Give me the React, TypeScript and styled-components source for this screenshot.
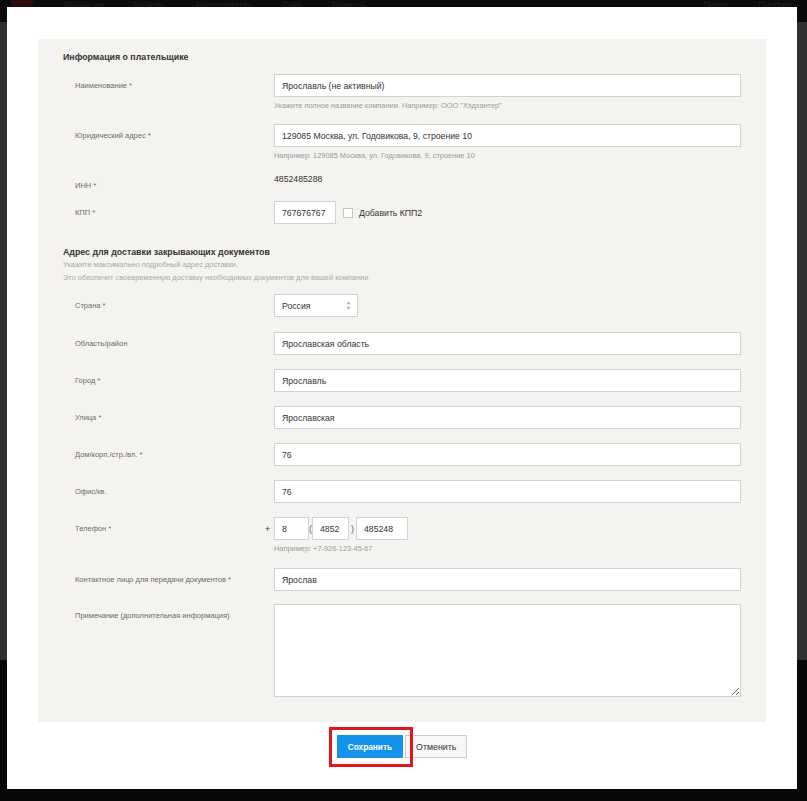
import React from "react";
import styled, { createGlobalStyle } from "styled-components";

const GlobalStyle = createGlobalStyle`
  html, body {
    margin: 0;
    padding: 0;
  }
  body {
    font-family: "Liberation Sans", Arial, sans-serif;
    background: #070707;
  }
  * {
    box-sizing: border-box;
  }
`;

const Page = styled.div`
  position: relative;
  width: 807px;
  height: 801px;
  overflow: hidden;
  display: flex;
  flex-direction: column;
`;

const TopBar = styled.header`
  height: 22px;
  background: #0b0b0b;
  display: flex;
  align-items: flex-start;
  padding: 0 10px;
  gap: 30px;
  overflow: hidden;
`;

const Logo = styled.div`
  width: 24px;
  height: 24px;
  margin-top: -13px;
  border-radius: 50%;
  background: #2e0a0d;
`;

const NavItem = styled.span`
  font-size: 9px;
  line-height: 10px;
  color: #1f1f1f;
`;

const NavSpacer = styled.div`
  flex: 1;
`;

const Backdrop = styled.main`
  height: 638px;
  background: #303030;
`;

const FooterShade = styled.footer`
  flex: 1;
  background: #080808;
`;

const Modal = styled.div`
  position: absolute;
  top: 7px;
  left: 7px;
  width: 790px;
  background: #fff;
  padding: 32px 31px 31px;
`;

const Panel = styled.div`
  background: #f4f3f0;
  padding: 12px 25px 25px;
`;

const SectionTitle = styled.h3<{ $mt?: number }>`
  margin: ${(p) => p.$mt ?? 0}px 0 0;
  font-size: 8.8px;
  line-height: 12px;
  font-weight: 700;
  color: #333;
`;

const SectionNote = styled.p`
  margin: 0;
  font-size: 7.45px;
  line-height: 13px;
  color: #aaa;
`;

const Row = styled.div<{ $mt: number }>`
  display: grid;
  grid-template-columns: 199px 1fr;
  align-items: start;
  margin-top: ${(p) => p.$mt}px;
  padding-left: 12px;
`;

const Label = styled.label<{ $pt?: number }>`
  padding-top: ${(p) => p.$pt ?? 6}px;
  font-size: 7.5px;
  line-height: 12px;
  color: #6a6a6a;
`;

const TextInput = styled.input<{ $w?: number }>`
  display: block;
  width: ${(p) => (p.$w ? `${p.$w}px` : "100%")};
  height: 23px;
  margin: 0;
  padding: 0 7px;
  border: 1px solid #cfd2d6;
  border-radius: 0;
  background: #fff;
  font-family: inherit;
  font-size: 8.7px;
  color: #333;
  outline: none;
`;

const Hint = styled.div`
  margin-top: 4px;
  font-size: 7.4px;
  line-height: 10px;
  color: #999;
`;

const Value = styled.div`
  font-size: 8.7px;
  line-height: 12px;
  color: #333;
`;

const Inline = styled.div`
  display: flex;
  align-items: center;
`;

const Checkbox = styled.input`
  appearance: none;
  width: 10px;
  height: 10px;
  margin: 0 6px 0 7px;
  border: 1px solid #c6c6c6;
  background: #fff;
`;

const CheckText = styled.span`
  font-size: 8.7px;
  color: #333;
`;

const SelectBox = styled.div`
  position: relative;
  width: 84px;
`;

const Select = styled.select`
  appearance: none;
  display: block;
  width: 100%;
  height: 23px;
  margin: 0;
  padding: 0 7px;
  border: 1px solid #cfd2d6;
  border-radius: 0;
  background: #fff;
  font-family: inherit;
  font-size: 8.7px;
  color: #333;
  outline: none;
`;

const SelectArrows = styled.svg`
  position: absolute;
  right: 7px;
  top: 7px;
  pointer-events: none;
`;

const PhoneGroup = styled.div`
  display: flex;
  align-items: center;
  margin-left: -9px;
`;

const Plus = styled.span`
  width: 9px;
  font-size: 9px;
  color: #333;
`;

const Paren = styled.span<{ $mx: number }>`
  margin: 0 ${(p) => p.$mx}px;
  font-size: 9px;
  color: #666;
`;

const TextArea = styled.textarea`
  display: block;
  width: 100%;
  height: 93px;
  margin: 0;
  border: 1px solid #cfd2d6;
  border-radius: 0;
  background: #fff;
  resize: both;
  outline: none;
`;

const Actions = styled.div`
  display: flex;
  justify-content: center;
  gap: 2px;
  margin-top: 13px;
`;

const Highlighted = styled.div`
  position: relative;
  display: flex;
`;

const Highlight = styled.span`
  position: absolute;
  left: -8px;
  top: -8px;
  right: -10px;
  bottom: -9px;
  border: 3px solid #e5141b;
  z-index: 1;
  pointer-events: none;
`;

const Button = styled.button<{ $primary?: boolean }>`
  height: 23px;
  margin: 0;
  padding: 0 10px;
  border: 1px solid ${(p) => (p.$primary ? "#1592ea" : "#cccccc")};
  border-radius: 0;
  background: ${(p) => (p.$primary ? "#1592ea" : "#f7f7f7")};
  color: ${(p) => (p.$primary ? "#fff" : "#333")};
  font-family: inherit;
  font-size: ${(p) => (p.$primary ? "8.3px" : "8.8px")};
  font-weight: ${(p) => (p.$primary ? 700 : 400)};
  cursor: pointer;
`;

type Field = { label: string; value: string; mt: number };

const addressFields: Field[] = [
  { label: "Область/район", value: "Ярославская область", mt: 15 },
  { label: "Город *", value: "Ярославль", mt: 14 },
  { label: "Улица *", value: "Ярославская", mt: 14 },
  { label: "Дом/корп./стр./вл. *", value: "76", mt: 14 },
  { label: "Офис/кв.", value: "76", mt: 14 },
];

const App = () => {
  return (
    <Page>
      <GlobalStyle />
      <TopBar>
        <Logo />
        <NavItem>Вакансии</NavItem>
        <NavItem>Резюме</NavItem>
        <NavItem>Мероприятия</NavItem>
        <NavItem>Счет</NavItem>
        <NavItem>Помощь</NavItem>
        <NavSpacer />
        <NavItem>Поиск</NavItem>
        <NavItem>Профиль</NavItem>
      </TopBar>
      <Backdrop />
      <FooterShade />

      <Modal>
        <Panel>
          <SectionTitle>Информация о плательщике</SectionTitle>

          <Row $mt={11}>
            <Label>Наименование *</Label>
            <div>
              <TextInput defaultValue="Ярославль (не активный)" />
              <Hint>Укажите полное название компании. Например: ООО "Хэдхантер"</Hint>
            </div>
          </Row>

          <Row $mt={13}>
            <Label>Юридический адрес *</Label>
            <div>
              <TextInput defaultValue="129085 Москва, ул. Годовикова, 9, строение 10" />
              <Hint>Например: 129085 Москва, ул. Годовикова, 9, строение 10</Hint>
            </div>
          </Row>

          <Row $mt={12}>
            <Label $pt={7}>ИНН *</Label>
            <Value>4852485288</Value>
          </Row>

          <Row $mt={9}>
            <Label>КПП *</Label>
            <Inline>
              <TextInput $w={62} defaultValue="767676767" />
              <Checkbox type="checkbox" />
              <CheckText>Добавить КПП2</CheckText>
            </Inline>
          </Row>

          <SectionTitle $mt={22}>Адрес для доставки закрывающих документов</SectionTitle>
          <SectionNote>Укажите максимально подробный адрес доставки.</SectionNote>
          <SectionNote>Это обеспечит своевременную доставку необходимых документов для вашей компании</SectionNote>

          <Row $mt={10}>
            <Label>Страна *</Label>
            <SelectBox>
              <Select defaultValue="ru">
                <option value="ru">Россия</option>
              </Select>
              <SelectArrows width="5" height="9" viewBox="0 0 5 9">
                <path d="M2.5 0.5 L4.5 3.2 H0.5 Z" fill="#aaa" />
                <path d="M2.5 8.5 L4.5 5.8 H0.5 Z" fill="#aaa" />
              </SelectArrows>
            </SelectBox>
          </Row>

          {addressFields.map((f) => (
            <Row key={f.label} $mt={f.mt}>
              <Label>{f.label}</Label>
              <TextInput defaultValue={f.value} />
            </Row>
          ))}

          <Row $mt={14}>
            <Label>Телефон *</Label>
            <div>
              <PhoneGroup>
                <Plus>+</Plus>
                <TextInput $w={35} defaultValue="8" />
                <Paren $mx={0}>(</Paren>
                <TextInput $w={37} defaultValue="4852" />
                <Paren $mx={2}>)</Paren>
                <TextInput $w={52} defaultValue="485248" />
              </PhoneGroup>
              <Hint>Например: +7-926-123-45-67</Hint>
            </div>
          </Row>

          <Row $mt={14}>
            <Label>Контактное лицо для передачи документов *</Label>
            <TextInput defaultValue="Ярослав" />
          </Row>

          <Row $mt={13}>
            <Label>Примечание (дополнительная информация)</Label>
            <TextArea />
          </Row>
        </Panel>

        <Actions>
          <Highlighted>
            <Button $primary>Сохранить</Button>
            <Highlight />
          </Highlighted>
          <Button>Отменить</Button>
        </Actions>
      </Modal>
    </Page>
  );
};

export default App;
